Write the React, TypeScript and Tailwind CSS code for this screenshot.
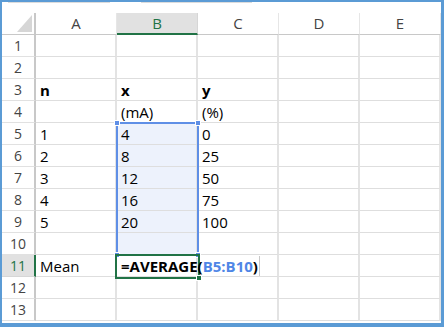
import React from 'react';

type Cell = { t: string; bold?: boolean };

const COLS = ['A', 'B', 'C', 'D', 'E'];
const ROWS = Array.from({ length: 13 }, (_, i) => i + 1);

const data: Record<string, Cell> = {
	A3: { t: 'n', bold: true },
	B3: { t: 'x', bold: true },
	C3: { t: 'y', bold: true },
	B4: { t: '(mA)' },
	C4: { t: '(%)' },
	A5: { t: '1' }, B5: { t: '4' }, C5: { t: '0' },
	A6: { t: '2' }, B6: { t: '8' }, C6: { t: '25' },
	A7: { t: '3' }, B7: { t: '12' }, C7: { t: '50' },
	A8: { t: '4' }, B8: { t: '16' }, C8: { t: '75' },
	A9: { t: '5' }, B9: { t: '20' }, C9: { t: '100' },
	A11: { t: 'Mean' },
};

const font = { fontFamily: '"Open Sans", "Noto Sans", sans-serif' };

export default function App() {
	return (
		<div
			className="w-[444px] h-[327px] bg-white border-[#5b9bd5] border-t-2 border-l-2 border-r-[3px] border-b-4 overflow-hidden text-[15px] text-black"
			style={font}
		>
			{/* remains of the sheet tabs */}
			<div className="h-[11px] flex items-start">
				<div className="ml-[6px] w-[102px] h-px bg-[#dcdcdc]" />
				<div className="ml-[31px] w-[111px] h-px bg-[#dcdcdc]" />
			</div>

			<div className="relative grid grid-cols-[34px_repeat(5,81px)] grid-rows-[22px_repeat(13,22px)]">
				{/* corner */}
				<div className="flex items-end justify-end p-[2px] border-r-2 border-b border-[#c8c8c8]">
					<svg width="15" height="17" viewBox="0 0 15 17">
						<polygon points="15,0 15,17 0,17" fill="#d6d6d6" />
					</svg>
				</div>
				{COLS.map(c => (
					<div
						key={c}
						className={
							c === 'B'
								? 'flex items-center justify-center bg-[#e1e1e1] border-b-2 border-b-[#217346] border-r border-r-[#d6d6d6] text-[#217346]'
								: 'flex items-center justify-center border-b border-b-[#c8c8c8] border-r border-r-[#e6e6e6] text-[#444]'
						}
					>
						{c}
					</div>
				))}

				{ROWS.map(r => (
					<React.Fragment key={r}>
						<div
							className={
								r === 11
									? 'flex items-end justify-center pb-[1px] leading-[18px] text-[14px] bg-[#e1e1e1] border-r-2 border-r-[#217346] border-b border-b-[#d6d6d6] text-[#217346]'
									: 'flex items-end justify-center pb-[1px] leading-[18px] text-[14px] border-r-2 border-r-[#c8c8c8] border-b border-b-[#e1e1e1] text-[#444]'
							}
						>
							{r}
						</div>
						{COLS.map(c => {
							const key = `${c}${r}`;
							const cell = data[key];
							const selected = c === 'B' && r >= 5 && r <= 10;
							return (
								<div
									key={key}
									className={
										(selected ? 'bg-[#edf2fc] ' : '') +
										'flex items-end pl-[4px] pb-[1px] leading-[18px] whitespace-nowrap border-r-2 border-r-[#e3e3e3] border-b border-b-[#dedede]'
									}
								>
									{key === 'B11' ? (
										<span className="relative z-10 font-bold">
											=AVERAGE(<span className="text-[#4f86e6]">B5:B10</span>)
										</span>
									) : cell ? (
										<span className={cell.bold ? 'font-bold' : ''}>{cell.t}</span>
									) : null}
								</div>
							);
						})}
					</React.Fragment>
				))}

				{/* range B5:B10, laid on its grid area */}
				<div className="absolute col-start-3 col-end-4 row-start-6 row-end-12 -inset-px border-2 border-[#5f8fe6] pointer-events-none">
					<span className="absolute -left-[4px] -top-[4px] w-[6px] h-[6px] bg-[#5f8fe6] border border-white" />
					<span className="absolute -right-[4px] -top-[4px] w-[6px] h-[6px] bg-[#5f8fe6] border border-white" />
					<span className="absolute -left-[4px] -bottom-[4px] w-[6px] h-[6px] bg-[#5f8fe6] border border-white" />
					<span className="absolute -right-[4px] -bottom-[4px] w-[6px] h-[6px] bg-[#5f8fe6] border border-white" />
				</div>
				{/* active cell B11 */}
				<div className="absolute col-start-3 col-end-4 row-start-12 row-end-13 -left-[2px] -right-[2px] -top-px -bottom-[2px] border-2 border-[#217346] pointer-events-none">
					<span className="absolute -right-[4px] -bottom-[4px] w-[6px] h-[6px] bg-[#217346] border border-white" />
				</div>
				{/* right edge of the in-cell editor */}
				<div className="absolute col-start-4 col-end-5 row-start-12 row-end-13 left-[61px] top-px bottom-px w-px bg-[#c8c8c8]" />
			</div>
		</div>
	);
}
